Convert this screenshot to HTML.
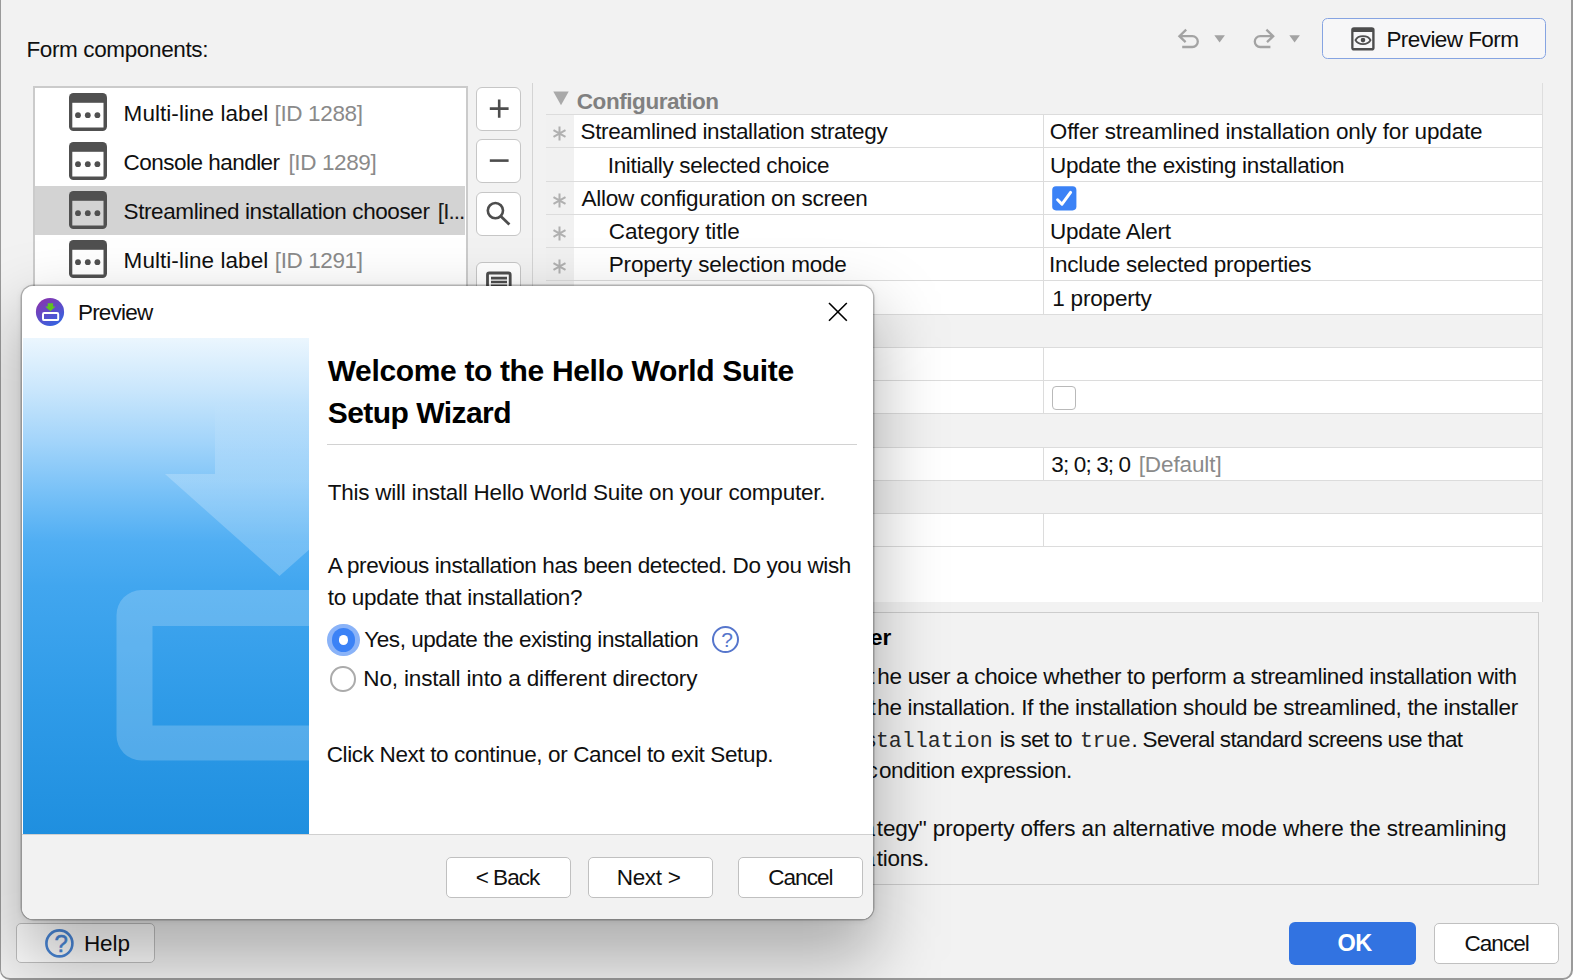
<!DOCTYPE html>
<html lang="en">
<head>
<meta charset="utf-8">
<title>Form components</title>
<style>
html,body{margin:0;padding:0;background:#fff;}
body{width:1573px;height:980px;position:relative;overflow:hidden;
  font-family:"Liberation Sans",sans-serif;font-size:22.5px;line-height:26px;color:#101010;}
.abs{position:absolute;}
.t{position:absolute;white-space:nowrap;}
.win{position:absolute;left:0;top:-30px;width:1573px;height:1010px;box-sizing:border-box;
  border:2px solid #9a9a9a;border-left-width:1.5px;border-radius:10px;background:#f2f2f2;}
.list{position:absolute;left:33px;top:86px;width:435px;height:240px;box-sizing:border-box;
  border:2px solid #cbcbcb;background:#fff;}
.sb{position:absolute;left:476px;width:44.5px;height:44px;box-sizing:border-box;border:1px solid #c6c6c6;
  border-radius:6px;background:#fff;}
.btn{position:absolute;box-sizing:border-box;border:1.2px solid #c0c0c0;border-radius:5px;background:#fff;}
.hl{position:absolute;left:546px;width:996px;height:1px;background:#dcdcdc;}
.cat{position:absolute;left:546px;width:996px;background:#f0f0f0;}
.cell{position:absolute;left:574px;width:968px;background:#fff;}
.gut{position:absolute;left:546px;width:28px;background:#f1f1f1;}
.ast{position:absolute;left:551.9px;}
.dlg{position:absolute;left:22px;top:285.8px;width:851px;height:633.2px;border-radius:11.5px;overflow:hidden;background:#fff;}
.dlgsh{position:absolute;left:22px;top:285.8px;width:851px;height:633.2px;border-radius:11.5px;
  box-shadow:0 0 0 1.5px rgba(0,0,0,0.23),0 1px 7px rgba(0,0,0,0.11);}
.dlgbl{position:absolute;left:18px;top:312px;width:859px;height:650px;border-radius:14px;background:rgba(0,0,0,0.28);filter:blur(34px);}
</style>
</head>
<body>
<div class="win"></div>
<div class="t" style="left:26.40px;top:36.75px;line-height:26px;letter-spacing:-0.368px;">Form components:</div>
<div class="list"></div>
<svg class="abs" style="left:68.8px;top:93.0px" width="38" height="38" viewBox="0 0 38 38"><rect x="0" y="0" width="38" height="38" rx="4.5" fill="#505050"/><rect x="3.3" y="9.8" width="31.2" height="24.7" fill="#fff"/><circle cx="9" cy="22.2" r="2.9" fill="#505050"/><circle cx="18.8" cy="22.2" r="2.9" fill="#505050"/><circle cx="28.4" cy="22.2" r="2.9" fill="#505050"/></svg>
<div class="t" style="left:123.60px;top:100.75px;line-height:26px;letter-spacing:0.053px;">Multi-line label</div>
<div class="t" style="left:274.60px;top:100.75px;line-height:26px;letter-spacing:-0.370px;color:#8a8a8a;">[ID 1288]</div>
<svg class="abs" style="left:68.8px;top:142.0px" width="38" height="38" viewBox="0 0 38 38"><rect x="0" y="0" width="38" height="38" rx="4.5" fill="#505050"/><rect x="3.3" y="9.8" width="31.2" height="24.7" fill="#fff"/><circle cx="9" cy="22.2" r="2.9" fill="#505050"/><circle cx="18.8" cy="22.2" r="2.9" fill="#505050"/><circle cx="28.4" cy="22.2" r="2.9" fill="#505050"/></svg>
<div class="t" style="left:123.60px;top:149.75px;line-height:26px;letter-spacing:-0.526px;">Console handler</div>
<div class="t" style="left:288.50px;top:149.75px;line-height:26px;letter-spacing:-0.382px;color:#8a8a8a;">[ID 1289]</div>
<div class="abs" style="left:35px;top:186.0px;width:430px;height:48.6px;background:#d3d3d3;"></div>
<svg class="abs" style="left:68.8px;top:191.0px" width="38" height="38" viewBox="0 0 38 38"><rect x="0" y="0" width="38" height="38" rx="4.5" fill="#505050"/><rect x="3.3" y="9.8" width="31.2" height="24.7" fill="#d3d3d3"/><circle cx="9" cy="22.2" r="2.9" fill="#505050"/><circle cx="18.8" cy="22.2" r="2.9" fill="#505050"/><circle cx="28.4" cy="22.2" r="2.9" fill="#505050"/></svg>
<div class="t" style="left:123.60px;top:198.75px;line-height:26px;letter-spacing:-0.407px;">Streamlined installation chooser</div>
<div class="t" style="left:437.85px;top:198.75px;line-height:26px;letter-spacing:-0.950px;color:#1a1a1a;">[I...</div>
<svg class="abs" style="left:68.8px;top:240.0px" width="38" height="38" viewBox="0 0 38 38"><rect x="0" y="0" width="38" height="38" rx="4.5" fill="#505050"/><rect x="3.3" y="9.8" width="31.2" height="24.7" fill="#fff"/><circle cx="9" cy="22.2" r="2.9" fill="#505050"/><circle cx="18.8" cy="22.2" r="2.9" fill="#505050"/><circle cx="28.4" cy="22.2" r="2.9" fill="#505050"/></svg>
<div class="t" style="left:123.60px;top:247.75px;line-height:26px;letter-spacing:0.053px;">Multi-line label</div>
<div class="t" style="left:274.80px;top:247.75px;line-height:26px;letter-spacing:-0.395px;color:#8a8a8a;">[ID 1291]</div>

<div class="sb" style="top:87px;"><svg class="abs" style="left:-0.3px;top:-0.8px" width="44" height="44" viewBox="0 0 44 44"><path d="M12.8 21.6H31.6M22.2 12.4V30.8" stroke="#4d4d4d" stroke-width="2.6" fill="none"/></svg></div>
<div class="sb" style="top:139.3px;"><svg class="abs" style="left:-0.3px;top:-1px" width="44" height="44" viewBox="0 0 44 44"><path d="M12.8 21.6H31.6" stroke="#4d4d4d" stroke-width="2.6" fill="none"/></svg></div>
<div class="sb" style="top:192px;"><svg class="abs" style="left:-1px;top:-1.2px" width="44" height="44" viewBox="0 0 44 44"><circle cx="19.4" cy="18.6" r="7.6" stroke="#4d4d4d" stroke-width="2.6" fill="none"/><path d="M24.8 24.2L33.4 32.6" stroke="#4d4d4d" stroke-width="2.8" fill="none"/></svg></div>
<div class="sb" style="top:261.8px;"></div><svg class="abs" style="left:476px;top:261.7px" width="44" height="44" viewBox="0 0 44 44"><rect x="11.5" y="11" width="22.7" height="20" rx="1.8" stroke="#4d4d4d" stroke-width="2.8" fill="none"/><path d="M15 16.2H31M15 20H31M15 23.8H31" stroke="#4d4d4d" stroke-width="2.7" fill="none"/></svg>
<div class="abs" style="left:532px;top:83px;width:1px;height:260px;background:#d4d4d4;"></div>

<div class="cell" style="top:114px;height:200px;"></div>
<div class="gut" style="top:114px;height:200px;"></div>
<div class="abs" style="left:1043px;top:114px;width:1px;height:200px;background:#dcdcdc;"></div>
<div class="cell" style="top:347px;height:66px;"></div>
<div class="gut" style="top:347px;height:66px;"></div>
<div class="abs" style="left:1043px;top:347px;width:1px;height:66px;background:#dcdcdc;"></div>
<div class="cell" style="top:447px;height:33px;"></div>
<div class="gut" style="top:447px;height:33px;"></div>
<div class="abs" style="left:1043px;top:447px;width:1px;height:33px;background:#dcdcdc;"></div>
<div class="cell" style="top:513px;height:33px;"></div>
<div class="gut" style="top:513px;height:33px;"></div>
<div class="abs" style="left:1043px;top:513px;width:1px;height:33px;background:#dcdcdc;"></div>
<div class="abs" style="left:546px;top:546px;width:996px;height:56px;background:#fff;"></div>
<div class="abs" style="left:1542px;top:83px;width:1px;height:519px;background:#dedede;"></div>
<div class="hl" style="top:114px;"></div>
<div class="hl" style="top:147px;"></div>
<div class="hl" style="top:181px;"></div>
<div class="hl" style="top:214px;"></div>
<div class="hl" style="top:247px;"></div>
<div class="hl" style="top:280px;"></div>
<div class="hl" style="top:314px;"></div>
<div class="hl" style="top:347px;"></div>
<div class="hl" style="top:380px;"></div>
<div class="hl" style="top:413px;"></div>
<div class="hl" style="top:447px;"></div>
<div class="hl" style="top:480px;"></div>
<div class="hl" style="top:513px;"></div>
<div class="hl" style="top:546px;"></div>
<svg class="ast" style="top:126.4px" width="15" height="15" viewBox="0 0 15 15"><path d="M7.5 0.6V14.4M1.5 4.05L13.5 10.95M1.5 10.95L13.5 4.05" stroke="#b0b0b0" stroke-width="2" fill="none"/></svg>
<div class="t" style="left:580.60px;top:118.75px;line-height:26px;letter-spacing:-0.371px;">Streamlined installation strategy</div>
<div class="t" style="left:1049.80px;top:118.75px;line-height:26px;letter-spacing:-0.156px;">Offer streamlined installation only for update</div>
<div class="t" style="left:607.80px;top:152.75px;line-height:26px;letter-spacing:-0.350px;">Initially selected choice</div>
<div class="t" style="left:1050.10px;top:152.75px;line-height:26px;letter-spacing:-0.344px;">Update the existing installation</div>
<svg class="ast" style="top:193.4px" width="15" height="15" viewBox="0 0 15 15"><path d="M7.5 0.6V14.4M1.5 4.05L13.5 10.95M1.5 10.95L13.5 4.05" stroke="#b0b0b0" stroke-width="2" fill="none"/></svg>
<div class="t" style="left:581.60px;top:185.75px;line-height:26px;letter-spacing:-0.279px;">Allow configuration on screen</div>
<svg class="ast" style="top:226.4px" width="15" height="15" viewBox="0 0 15 15"><path d="M7.5 0.6V14.4M1.5 4.05L13.5 10.95M1.5 10.95L13.5 4.05" stroke="#b0b0b0" stroke-width="2" fill="none"/></svg>
<div class="t" style="left:608.80px;top:218.75px;line-height:26px;letter-spacing:-0.127px;">Category title</div>
<div class="t" style="left:1050.10px;top:218.75px;line-height:26px;letter-spacing:-0.265px;">Update Alert</div>
<svg class="ast" style="top:259.4px" width="15" height="15" viewBox="0 0 15 15"><path d="M7.5 0.6V14.4M1.5 4.05L13.5 10.95M1.5 10.95L13.5 4.05" stroke="#b0b0b0" stroke-width="2" fill="none"/></svg>
<div class="t" style="left:608.80px;top:251.75px;line-height:26px;letter-spacing:-0.209px;">Property selection mode</div>
<div class="t" style="left:1049.10px;top:251.75px;line-height:26px;letter-spacing:-0.249px;">Include selected properties</div>
<svg class="ast" style="top:293.4px" width="15" height="15" viewBox="0 0 15 15"><path d="M7.5 0.6V14.4M1.5 4.05L13.5 10.95M1.5 10.95L13.5 4.05" stroke="#b0b0b0" stroke-width="2" fill="none"/></svg>
<div class="t" style="left:608.80px;top:285.75px;line-height:26px;">Selected properties</div>
<div class="t" style="left:1052.20px;top:285.75px;line-height:26px;letter-spacing:-0.184px;">1 property</div>
<div class="t" style="left:581.60px;top:351.75px;line-height:26px;">Visibility script</div>
<div class="t" style="left:580.60px;top:384.75px;line-height:26px;">Skip in console mode</div>
<div class="t" style="left:579.60px;top:451.75px;line-height:26px;">Insets</div>
<div class="t" style="left:579.60px;top:517.75px;line-height:26px;">Initialization script</div>
<div class="t" style="left:1051.30px;top:451.75px;line-height:26px;letter-spacing:-0.861px;">3; 0; 3; 0</div>
<div class="t" style="left:1138.70px;top:451.75px;line-height:26px;letter-spacing:-0.105px;color:#8a8a8a;">[Default]</div>
<svg class="abs" style="left:552.5px;top:91px" width="16" height="15" viewBox="0 0 16 15"><path d="M0.3 0.4H15.7L8 14.3Z" fill="#a9a9a9"/></svg>
<div class="t" style="left:576.80px;top:88.75px;line-height:26px;font-weight:bold;letter-spacing:-0.435px;color:#808080;">Configuration</div>
<div class="t" style="left:575.80px;top:318.75px;line-height:26px;font-weight:bold;color:#808080;">Initialization</div>
<div class="t" style="left:575.80px;top:418.75px;line-height:26px;font-weight:bold;color:#808080;">Layout</div>
<div class="t" style="left:576.80px;top:484.75px;line-height:26px;font-weight:bold;color:#808080;">Scripts</div>
<svg class="abs" style="left:1051.5px;top:185.8px" width="25" height="25" viewBox="0 0 25 25"><rect x="0.2" y="0.2" width="24.2" height="24.2" rx="3.8" fill="#3b82f6"/><path d="M5.6 13.8L10 18.2L18.6 6.4" stroke="#fff" stroke-width="3" stroke-linecap="round" stroke-linejoin="round" fill="none"/></svg>
<div class="abs" style="left:1052px;top:385.5px;width:24px;height:24px;box-sizing:border-box;border:1.5px solid #b9b9b9;border-radius:4px;background:#fff;"></div>
<div class="abs" style="left:546px;top:611.5px;width:993px;height:273.5px;box-sizing:border-box;border:1.5px solid #cdcdcd;background:#f2f2f2;"></div>
<div class="t" style="left:543.67px;top:624.75px;line-height:26px;font-weight:bold;color:#000;">Streamlined installation chooser</div>
<div class="t" style="left:573.52px;top:663.75px;line-height:26px;">A form component that offers t</div>
<div class="t" style="left:877.30px;top:663.75px;line-height:26px;letter-spacing:-0.314px;">he user a choice whether to perform a streamlined installation with</div>
<div class="t" style="left:546.85px;top:694.75px;line-height:26px;">fewer questions or to customize t</div>
<div class="t" style="left:877.30px;top:694.75px;line-height:26px;letter-spacing:-0.358px;">he installation. If the installation should be streamlined, the installer</div>
<div class="t" style="left:561.72px;top:726.75px;line-height:26px;">variable</div>
<div class="t" style="left:643.71px;top:728.75px;font-size:21.6px;line-height:25px;font-family:'Liberation Mono',monospace;color:#2a2a2a;">sys.streamlinedIns</div>
<div class="t" style="left:875.90px;top:728.75px;font-size:21.6px;line-height:25px;font-family:'Liberation Mono',monospace;letter-spacing:0.017px;color:#2a2a2a;">tallation</div>
<div class="t" style="left:999.70px;top:726.75px;line-height:26px;letter-spacing:-0.577px;">is set to</div>
<div class="t" style="left:1079.90px;top:728.75px;font-size:21.6px;line-height:25px;font-family:'Liberation Mono',monospace;letter-spacing:-0.225px;color:#2a2a2a;">true</div>
<div class="t" style="left:1131.40px;top:726.75px;line-height:26px;letter-spacing:-0.656px;">. Several standard screens use that</div>
<div class="t" style="left:707.67px;top:757.75px;line-height:26px;">variable in their c</div>
<div class="t" style="left:878.90px;top:757.75px;line-height:26px;letter-spacing:-0.351px;">ondition expression.</div>
<div class="t" style="left:545.62px;top:816.15px;line-height:26px;">The "Streamlined installation stra</div>
<div class="t" style="left:876.80px;top:816.15px;line-height:26px;letter-spacing:-0.130px;">tegy" property offers an alternative mode where the streamlining</div>
<div class="t" style="left:551.48px;top:846.35px;line-height:26px;">is only offered for update installa</div>
<div class="t" style="left:876.80px;top:846.35px;line-height:26px;letter-spacing:-0.245px;">tions.</div>
<div class="btn" style="left:16.2px;top:923px;width:138.6px;height:40.3px;"></div>
<svg class="abs" style="left:44px;top:928px" width="31" height="31" viewBox="0 0 31 31"><circle cx="15.4" cy="15.4" r="13" stroke="#4a88da" stroke-width="2.6" fill="none"/></svg>
<div class="t" style="left:54.40px;top:929.75px;font-size:24px;line-height:27px;color:#4a88da;-webkit-text-stroke:0.5px #4a88da;">?</div>
<div class="t" style="left:83.90px;top:930.75px;line-height:26px;letter-spacing:-0.087px;">Help</div>
<div class="abs" style="left:1289px;top:922px;width:126.5px;height:43px;border-radius:6px;background:#3273e1;"></div>
<div class="t" style="left:1337.49px;top:929.75px;font-size:23.5px;line-height:27px;font-weight:bold;letter-spacing:-0.450px;color:#fff;">OK</div>
<div class="btn" style="left:1434px;top:923px;width:125px;height:40.5px;"></div>
<div class="t" style="left:1464.46px;top:930.75px;line-height:26px;letter-spacing:-0.950px;">Cancel</div>

<svg class="abs" style="left:1174px;top:24px" width="30" height="30" viewBox="0 0 30 30"><path d="M12.2 5.6L5.4 12.2L11.6 18.2M5.8 12.2H18.4A5.4 5.4 0 0 1 18.4 23H8.2" stroke="#a3a3a3" stroke-width="2.3" fill="none"/></svg>
<svg class="abs" style="left:1214px;top:34.5px" width="12" height="8" viewBox="0 0 12 8"><path d="M0.3 0.3H10.9L5.6 7.4Z" fill="#a3a3a3"/></svg>
<svg class="abs" style="left:1248px;top:24px" width="30" height="30" viewBox="0 0 30 30"><path d="M18.4 5.6L25.2 12.2L19 18.2M24.8 12.2H12.2A5.4 5.4 0 0 0 12.2 23H22.4" stroke="#a3a3a3" stroke-width="2.3" fill="none"/></svg>
<svg class="abs" style="left:1289.4px;top:34.5px" width="12" height="8" viewBox="0 0 12 8"><path d="M0.3 0.3H10.9L5.6 7.4Z" fill="#a3a3a3"/></svg>
<div class="abs" style="left:1321.5px;top:17.5px;width:224px;height:41.5px;box-sizing:border-box;border:1.6px solid #86a4e2;border-radius:5.5px;background:#f7f7f8;"></div>
<svg class="abs" style="left:1351.2px;top:27.1px" width="24" height="24" viewBox="0 0 24 24"><rect x="0.2" y="0.2" width="23.4" height="23.4" rx="2.8" fill="#4d4d4d"/><rect x="2.5" y="5" width="18.7" height="16" fill="#f7f7f8"/><path d="M4.5 13.1C7.2 7.8 16.8 7.8 19.5 13.1C16.8 18.4 7.2 18.4 4.5 13.1Z" stroke="#4f4f4f" stroke-width="1.9" fill="none"/><circle cx="12" cy="13.1" r="2.3" fill="#4d4d4d"/></svg>

<div class="t" style="left:1386.40px;top:26.75px;line-height:26px;letter-spacing:-0.566px;">Preview Form</div>
<div class="dlgbl"></div>
<div class="dlgsh"></div>
<div class="dlg">

  <svg class="abs" style="left:13.00px;top:11.20px" width="30" height="30" viewBox="0 0 30 30">
    <defs><linearGradient id="ig" x1="0.2" y1="0" x2="0.8" y2="1"><stop offset="0" stop-color="#8a33ad"/><stop offset="1" stop-color="#3066e4"/></linearGradient></defs>
    <circle cx="15" cy="15" r="14.1" fill="url(#ig)"/>
    <path d="M12.7 6.2H18.1V9.6H20.6L15.4 14.2L10.2 9.6H12.7Z" fill="#5fc321"/>
    <rect x="8" y="16" width="15.2" height="7.1" rx="1.2" stroke="#fff" stroke-width="2" fill="none"/>
  </svg>
<div class="t" style="left:56.00px;top:13.95px;line-height:26px;letter-spacing:-0.813px;">Preview</div>

  <svg class="abs" style="left:804.60px;top:14.80px" width="22" height="22" viewBox="0 0 22 22"><path d="M2 2L19.8 19.8M19.8 2L2 19.8" stroke="#000" stroke-width="1.6" fill="none"/></svg>
  <div class="abs" style="left:0.50px;top:52.50px;width:286.2px;height:496.6px;overflow:hidden;background:linear-gradient(180deg,#ebf6fe 0%,#cbe7fc 10%,#a2d4fa 21%,#78c1f7 31%,#50aef3 41%,#41a6ef 50%,#2f9be8 73%,#1f8fdf 100%);">
    <svg class="abs" style="left:0;top:0" width="287" height="497" viewBox="0 0 287 497">
      <defs><linearGradient id="ag" x1="0" y1="0" x2="0" y2="1"><stop offset="0" stop-color="#fff" stop-opacity="0"/><stop offset="0.45" stop-color="#fff" stop-opacity="0.22"/><stop offset="1" stop-color="#fff" stop-opacity="0.22"/></linearGradient></defs>
      <path d="M192 63H400V136H371L256.5 238L142 136H192Z" fill="url(#ag)"/>
      <path d="M118.5 252H400V422.5H118.5A25 25 0 0 1 93.5 397.5V277A25 25 0 0 1 118.5 252ZM129.5 288V387.5H400V288Z" fill="#fff" fill-opacity="0.2" fill-rule="evenodd"/>
    </svg>
  </div>
  <div class="abs" style="left:305.20px;top:157.80px;width:530.3px;height:1.5px;background:#d2d2d2;"></div>
<div class="t" style="left:305.70px;top:67.95px;font-size:30px;line-height:34px;font-weight:bold;letter-spacing:-0.351px;color:#000;">Welcome to the Hello World Suite</div>
<div class="t" style="left:305.70px;top:109.95px;font-size:30px;line-height:34px;font-weight:bold;letter-spacing:-0.538px;color:#000;">Setup Wizard</div>
<div class="t" style="left:305.70px;top:193.95px;line-height:26px;letter-spacing:-0.230px;">This will install Hello World Suite on your computer.</div>
<div class="t" style="left:305.70px;top:266.95px;line-height:26px;letter-spacing:-0.387px;">A previous installation has been detected. Do you wish</div>
<div class="t" style="left:305.70px;top:298.95px;line-height:26px;letter-spacing:-0.288px;">to update that installation?</div>
<div class="abs" style="left:305.00px;top:338.10px;width:32.6px;height:32.6px;border-radius:50%;box-sizing:border-box;background:#8ab3f8;"></div>
<div class="abs" style="left:309.60px;top:342.70px;width:23.4px;height:23.4px;border-radius:50%;box-sizing:border-box;background:#3b82f6;"></div>
<div class="abs" style="left:316.50px;top:349.60px;width:9.6px;height:9.6px;border-radius:50%;box-sizing:border-box;background:#fff;"></div>
<div class="abs" style="left:690.00px;top:340.20px;width:27px;height:27px;border-radius:50%;box-sizing:border-box;border:2.1px solid #5676cc;"></div>
<div class="abs" style="left:308.20px;top:380.25px;width:25.7px;height:25.7px;border-radius:50%;box-sizing:border-box;border:2.1px solid #ababab;background:#fff;"></div>
<div class="t" style="left:342.30px;top:340.95px;line-height:26px;letter-spacing:-0.451px;">Yes, update the existing installation</div>
<div class="t" style="left:699.20px;top:342.35px;font-size:21px;line-height:24px;color:#5676cc;">?</div>
<div class="t" style="left:341.30px;top:379.95px;line-height:26px;letter-spacing:-0.151px;">No, install into a different directory</div>
<div class="t" style="left:304.70px;top:455.95px;line-height:26px;letter-spacing:-0.364px;">Click Next to continue, or Cancel to exit Setup.</div>

  <div class="abs" style="left:0;top:548.70px;width:852px;height:90px;background:#f2f2f2;border-top:1.3px solid #d0d0d0;box-sizing:border-box;"></div>
  <div class="btn" style="left:424.10px;top:571.40px;width:125px;height:40.8px;"></div>
  <div class="btn" style="left:566.20px;top:571.40px;width:125px;height:40.8px;"></div>
  <div class="btn" style="left:715.90px;top:571.40px;width:125px;height:40.8px;"></div>
<div class="t" style="left:453.64px;top:578.95px;line-height:26px;letter-spacing:-0.950px;">&lt; Back</div>
<div class="t" style="left:594.70px;top:578.95px;line-height:26px;letter-spacing:-0.303px;">Next &gt;</div>
<div class="t" style="left:746.21px;top:578.95px;line-height:26px;letter-spacing:-0.950px;">Cancel</div>
</div>
</body>
</html>
